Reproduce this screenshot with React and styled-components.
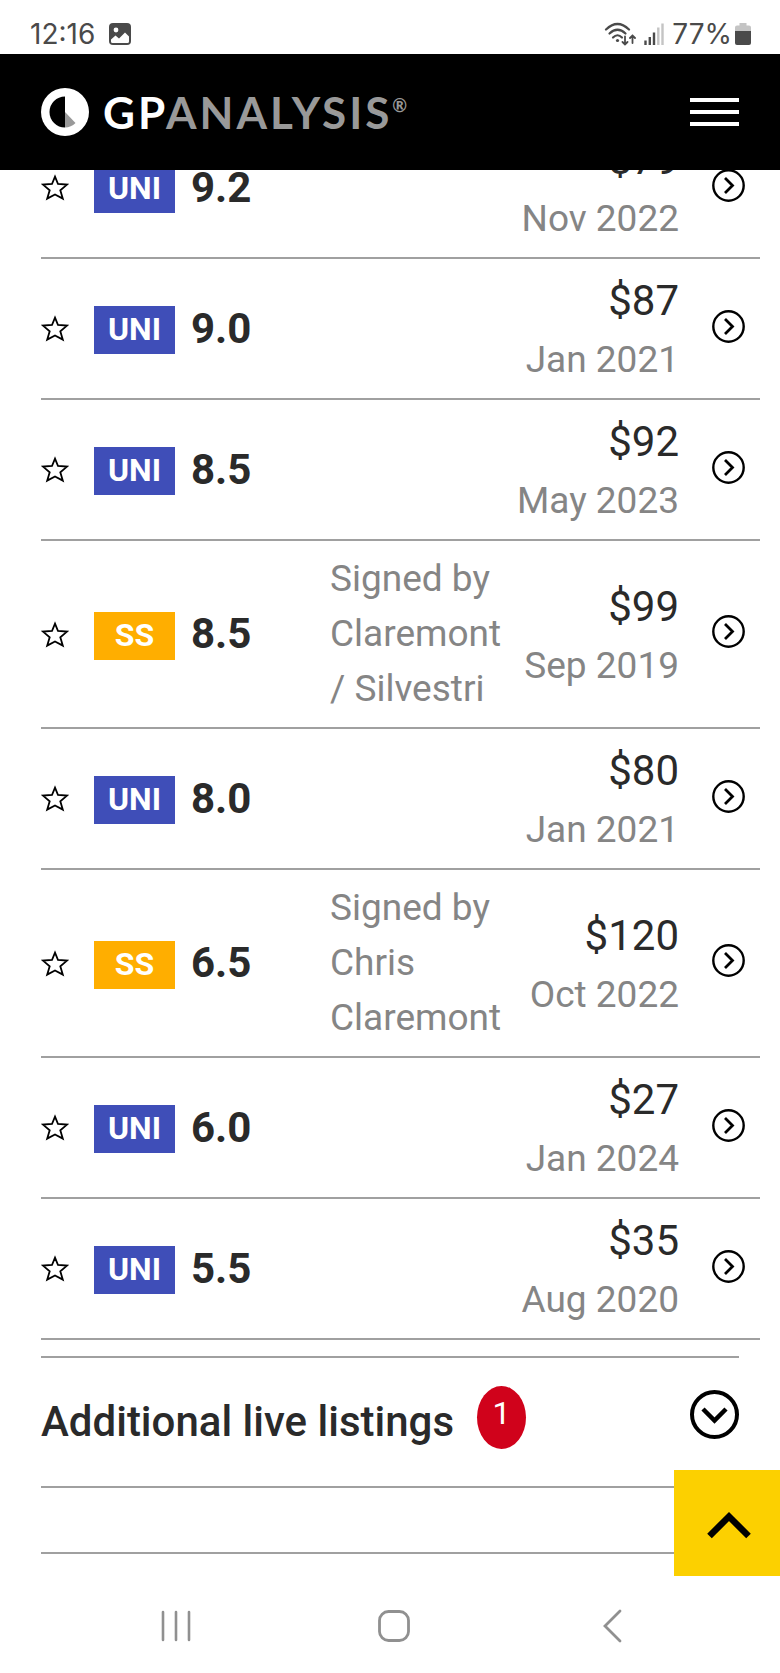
import React, { useState } from 'react'

import styled, { createGlobalStyle } from 'styled-components'

const sales = [
	{ id: 1, label: 'UNI', grade: '9.2', note: '', price: 79, date: 'Nov 2022' },
	{ id: 2, label: 'UNI', grade: '9.0', note: '', price: 87, date: 'Jan 2021' },
	{ id: 3, label: 'UNI', grade: '8.5', note: '', price: 92, date: 'May 2023' },
	{ id: 4, label: 'SS', grade: '8.5', note: 'Signed by Claremont / Silvestri', price: 99, date: 'Sep 2019' },
	{ id: 5, label: 'UNI', grade: '8.0', note: '', price: 80, date: 'Jan 2021' },
	{ id: 6, label: 'SS', grade: '6.5', note: 'Signed by Chris Claremont', price: 120, date: 'Oct 2022' },
	{ id: 7, label: 'UNI', grade: '6.0', note: '', price: 27, date: 'Jan 2024' },
	{ id: 8, label: 'UNI', grade: '5.5', note: '', price: 35, date: 'Aug 2020' },
]

function StatusBar() {
	return (
		<StyledStatusBar>
			<StatusGroup $gap='14px'>
				<span>12:16</span>
				<svg width='22' height='22' viewBox='0 0 22 22'>
					<rect width='22' height='22' rx='4' fill='#4a4a4a' />
					<circle cx='7' cy='7' r='2.4' fill='#fff' />
					<path d='M2 16.500L6.500 12.500L10 15.500L16 9.500L20 13.500V18.500Q20 20 18.500 20H3.500Q2 20 2 18.500Z' fill='#fff' />
				</svg>
			</StatusGroup>
			<StatusGroup $gap='8px'>
				<svg width='32' height='24' viewBox='0 0 32 24' fill='none' stroke='#4a4a4a' strokeWidth='2.2' strokeLinecap='round'>
					<path d='M2 7.500Q13.500 -3.500 25 7.500' />
					<path d='M5.500 11.500Q13.500 4 21.500 11.500' />
					<path d='M9 15.500Q13.500 11 18 15.500' />
					<circle cx='13.500' cy='18.500' r='1.6' fill='#4a4a4a' stroke='none' />
					<path d='M21 14.500V22.500M18.500 20L21 22.500L23.500 20M28.500 21V13.500M26 16L28.500 13.500L31 16' strokeWidth='1.8' />
				</svg>
				<svg width='20' height='22' viewBox='0 0 20 22' strokeWidth='2.4' stroke='#4a4a4a'>
					<path d='M1.500 17.500V22M5.800 14V22M10 9.500V22' />
					<path d='M14.300 4.500V22M18.500 0.500V22' stroke='#c4c4c4' />
				</svg>
				<StatusGroup $gap='3px'>
					<span>77%</span>
					<svg width='16' height='22' viewBox='0 0 16 22'>
						<path d='M4.500 0H11.500V2.500H14Q16 2.500 16 4.500V9H0V4.500Q0 2.500 2 2.500H4.500Z' fill='#c4c4c4' />
						<path d='M0 8H16V20Q16 22 14 22H2Q0 22 0 20Z' fill='#4a4a4a' />
					</svg>
				</StatusGroup>
			</StatusGroup>
		</StyledStatusBar>
	)
}

function Header() {
	return (
		<StyledHeader>
			<Brand href='#home'>
				<svg width='48' height='48' viewBox='0 0 48 48'>
					<circle cx='24' cy='24' r='24' fill='#fff' />
					<path d='M24 8.500A15.500 15.500 0 0 0 24 39.500Z' fill='#000' />
					<path d='M24 24L34.500 35A15.500 15.500 0 0 1 24 39.500Z' fill='#999' />
				</svg>
				<BrandName>GP<span>ANALYSIS</span><sup>®</sup></BrandName>
			</Brand>
			<IconButton aria-label='Menu'>
				<svg width='49' height='30' viewBox='0 0 49 30' stroke='#fff' strokeWidth='4'>
					<path d='M0 3H49M0 15H49M0 27H49' />
				</svg>
			</IconButton>
		</StyledHeader>
	)
}

function SaleRow({ sale }) {
	let [starred, setStarred] = useState(false)

	return (
		<tr>
			<Cell>
				<IconButton aria-label='Watch' aria-pressed={starred} onClick={() => { setStarred(!starred) }}>
					<svg width='28' height='28' viewBox='0 0 28 28'>
						<path
							d='M14 3.700L17 11L26 11.600L19.300 17.200L21.800 25.600L14 21.400L6.200 25.600L8.700 17.200L2 11.600L11 11Z'
							fill={starred ? '#000' : 'none'} stroke='#000' strokeWidth='1.8'
						/>
					</svg>
				</IconButton>
			</Cell>
			<Cell><LabelTag $label={sale.label}>{sale.label}</LabelTag></Cell>
			<Cell><Grade>{sale.grade}</Grade></Cell>
			<Cell><Note>{sale.note}</Note></Cell>
			<Cell $align='right'>
				<Price>${sale.price}</Price>
				<SaleDate>{sale.date}</SaleDate>
			</Cell>
			<Cell>
				<RowLink href={'#sale-' + sale.id} aria-label='View sale'>
					<svg width='33' height='33' viewBox='0 0 33 33' fill='none' stroke='#000'>
						<circle cx='16.500' cy='16.500' r='15.200' strokeWidth='2.400' />
						<path d='M13 9L20.500 16.500L13 24' strokeWidth='2.800' />
					</svg>
				</RowLink>
			</Cell>
		</tr>
	)
}

function App() {
	let [open, setOpen] = useState(false)

	return (
		<>
			<GlobalStyle />
			<StatusBar />
			<Header />
			<Main>
				<SalesTable>
					<colgroup>
						<col className='star' />
						<col className='label' />
						<col className='grade' />
						<col />
						<col className='price' />
						<col className='more' />
					</colgroup>
					<tbody>
						{sales.map(s => <SaleRow key={s.id} sale={s} />)}
					</tbody>
				</SalesTable>
				<Listings>
					<ListingsHeader>
						<h2>Additional live listings</h2>
						<Count>1</Count>
						<ToggleButton aria-label='Toggle listings' aria-expanded={open} onClick={() => { setOpen(!open) }}>
							<svg width='49' height='49' viewBox='0 0 49 49' fill='none' stroke='#000'>
								<circle cx='24.500' cy='24.500' r='22.500' strokeWidth='4' />
								<path d='M13 19L24.500 30.500L36 19' strokeWidth='4.500' />
							</svg>
						</ToggleButton>
					</ListingsHeader>
					<ListingsFooter />
				</Listings>
				<BackToTop href='#top' aria-label='Back to top'>
					<svg width='44' height='28' viewBox='0 0 44 28' fill='none' stroke='#000' strokeWidth='6.500'>
						<path d='M2.500 25L22 5.500L41.500 25' />
					</svg>
				</BackToTop>
			</Main>
			<SystemNav>
				<NavButton aria-label='Recents'>
					<svg width='30' height='32' viewBox='0 0 30 32' stroke='#909090' strokeWidth='2.600' strokeLinecap='round'>
						<path d='M2 2V30M15 2V30M28 2V30' />
					</svg>
				</NavButton>
				<NavButton aria-label='Home'>
					<svg width='32' height='32' viewBox='0 0 32 32' fill='none' stroke='#909090' strokeWidth='2.800'>
						<rect x='1.500' y='1.500' width='29' height='29' rx='9' />
					</svg>
				</NavButton>
				<NavButton aria-label='Back'>
					<svg width='20' height='34' viewBox='0 0 20 34' fill='none' stroke='#909090' strokeWidth='2.800' strokeLinecap='round'>
						<path d='M18 2L3 17L18 32' />
					</svg>
				</NavButton>
			</SystemNav>
		</>
	)
}

const GlobalStyle = createGlobalStyle`
	* {
		box-sizing: border-box;
	}

	body {
		margin: 0;
		background: #fff;
		color: #2a2a2a;
		font-family: Roboto, "Liberation Sans", sans-serif;
	}

	svg {
		display: block;
		flex-shrink: 0;
	}
`

const IconButton = styled.button`
	display: block;
	padding: 0;
	border: 0;
	background: none;
	cursor: pointer;
`

const StyledStatusBar = styled.div`
	display: flex;
	justify-content: space-between;
	align-items: center;
	height: 54px;
	padding: 14px 29px 0 30px;
	color: #4a4a4a;
	font-family: Inter, "Liberation Sans", sans-serif;
	font-size: 28px;
	line-height: 40px;
`

const StatusGroup = styled.div`
	display: flex;
	align-items: center;
	gap: ${({ $gap }) => $gap};
`

const StyledHeader = styled.header`
	position: relative;
	z-index: 1;
	display: flex;
	justify-content: space-between;
	align-items: center;
	height: 116px;
	padding: 0 41px;
	background: #000;
`

const Brand = styled.a`
	display: flex;
	align-items: center;
	gap: 14px;
	text-decoration: none;
`

const BrandName = styled.span`
	color: #fff;
	font-family: Lato, "Liberation Sans", sans-serif;
	font-size: 44px;
	font-weight: 700;
	line-height: 48px;
	letter-spacing: 3px;

	span, sup {
		color: #999;
	}

	sup {
		font-size: 18px;
		line-height: 0;
		vertical-align: 17px;
	}
`

const Main = styled.main`
	position: relative;
	padding: 0 0 22px 41px;
`

// starts part way under the header, as when the list has been scrolled
const SalesTable = styled.table`
	width: calc(100% - 20px);
	margin-top: -52px;
	table-layout: fixed;
	border-spacing: 0;

	.star {
		width: 53px;
	}

	.label {
		width: 97px;
	}

	.grade {
		width: 139px;
	}

	.price {
		width: 164px;
	}

	.more {
		width: 81px;
	}
`

const Cell = styled.td`
	padding: 10px 0 11px;
	border-bottom: 2px solid #a0a0a0;
	text-align: ${({ $align }) => $align || 'left'};
	vertical-align: middle;
`

const LabelTag = styled.div`
	width: 81px;
	height: 48px;
	margin-top: 4px;
	background: ${({ $label }) => $label === 'SS' ? '#ffae00' : '#3f4eb8'};
	color: #fff;
	font-size: 32px;
	font-weight: 700;
	line-height: 46px;
	text-align: center;
`

const Grade = styled.div`
	font-size: 42px;
	font-weight: 700;
	line-height: 61px;
`

const Note = styled.div`
	color: #858585;
	font-size: 37px;
	line-height: 55px;
`

const Price = styled.div`
	font-size: 42px;
	line-height: 63px;
`

const SaleDate = styled.div`
	color: #858585;
	font-size: 37px;
	line-height: 55px;
	white-space: nowrap;
`

const RowLink = styled.a`
	display: block;
	width: 33px;
	margin: 0 0 4px 33px;
`

const Listings = styled.section`
	margin: 16px 41px 0 0;
	border-top: 2px solid #a0a0a0;
`

const ListingsHeader = styled.div`
	display: flex;
	align-items: flex-start;
	gap: 23px;
	padding: 28px 0;
	border-bottom: 2px solid #a0a0a0;

	h2 {
		margin: 0;
		font-size: 42px;
		font-weight: 500;
		line-height: 72px;
	}
`

const Count = styled.span`
	width: 49px;
	height: 63px;
	border-radius: 50%;
	background: #d0021b;
	color: #fff;
	font-size: 32px;
	line-height: 55px;
	text-align: center;
`

const ToggleButton = styled(IconButton)`
	margin-left: auto;
	padding: 4px 0;
`

const ListingsFooter = styled.div`
	height: 66px;
	border-bottom: 2px solid #a0a0a0;
`

const BackToTop = styled.a`
	position: absolute;
	right: 0;
	bottom: 0;
	display: flex;
	justify-content: center;
	align-items: center;
	width: 106px;
	height: 106px;
	padding: 4px 0 0 4px;
	background: #fcd000;
`

const SystemNav = styled.nav`
	display: flex;
	justify-content: space-between;
	align-items: center;
	height: 97px;
	padding: 3px 150px 0 158px;
`

const NavButton = styled(IconButton)`
	display: flex;
	justify-content: center;
	width: 36px;
`

export default App
